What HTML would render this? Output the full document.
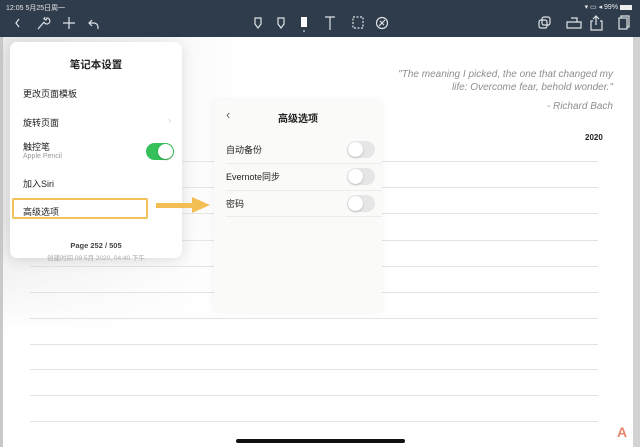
<!DOCTYPE html>
<html><head><meta charset="utf-8"><style>
*{margin:0;padding:0;box-sizing:border-box}
body{width:640px;height:447px;overflow:hidden;position:relative;background:#fff;font-family:"Liberation Sans","Noto Sans CJK SC",sans-serif;}
.hdr{position:absolute;left:0;top:0;width:640px;height:37px;background:#2f3c4b;color:#e6e9ec}
.st{position:absolute;top:3px;font-size:7px;color:#e8e8e8}
.page{position:absolute;left:0;top:37px;width:640px;height:410px;background:#fff}
.ledge{position:absolute;left:0;top:37px;width:3px;height:410px;background:#c9c9c9}
.redge{position:absolute;right:0;top:37px;width:7px;height:410px;background:#d3d3d3}
.shade{position:absolute;left:3px;top:37px;width:240px;height:300px;background:linear-gradient(90deg,rgba(225,225,225,.75),rgba(240,240,240,.35) 75%,rgba(255,255,255,0));-webkit-mask-image:linear-gradient(180deg,#000 60%,transparent);}
.line{position:absolute;left:30px;width:568px;height:1px;background:#e2e2e2}
.quote{position:absolute;right:27px;top:68px;text-align:right;font-style:italic;font-size:10px;color:#8e8e8e;line-height:13px}
.p1{position:absolute;left:10px;top:42px;width:172px;height:216px;background:#fff;border-radius:7px;box-shadow:0 2px 14px rgba(0,0,0,.12)}
.p2{position:absolute;left:214px;top:100px;width:168px;height:212px;background:#fafaf8;box-shadow:0 0 8px rgba(0,0,0,.05)}
.t{position:absolute;font-size:9px;color:#222}
.tg{position:absolute;width:28px;height:17px;border-radius:9px;background:#e6e6e6}
.tg::after{content:"";position:absolute;top:1px;left:1px;width:15px;height:15px;border-radius:50%;background:#fff;box-shadow:0 1px 2px rgba(0,0,0,.2)}
.tg.on{background:#35c05a}.tg.on::after{left:12px}
.sep{position:absolute;height:1px;background:#ececec}
</style></head><body>
<div class="hdr">
<div class="st" style="left:6px">12:05 5月25日周一</div>
<div class="st" style="right:8px">▾ ▭ ◂ 99% <span style="display:inline-block;width:12px;height:5px;background:#eee;vertical-align:middle"></span></div>
<svg width="640" height="37" style="position:absolute;left:0;top:0" fill="none" stroke="#dfe3e7" stroke-width="1.2">
<path d="M19 19l-3 4 3 4"/>
<path d="M38 29l6-7M44 22a3 3 0 1 0 3-4l-1 2-2-1 1-2"/>
<path d="M69 17v12M63 23h12"/>
<path d="M92 20l-3 3 3 3M89 23h5a4 4 0 0 1 4 4v2"/>
<path d="M255 18h6v6l-3 4-3-4z"/>
<path d="M278 18h6v6l-3 4-3-4z"/>
<rect x="301" y="17" width="6" height="10" fill="#fff" stroke="none"/><circle cx="304" cy="31" r=".8" fill="#fff" stroke="none"/>
<path d="M325 17h10M330 17v13"/>
<rect x="353" y="17" width="10" height="11" stroke-dasharray="2 1.5"/>
<circle cx="382" cy="23" r="5.5"/><path d="M379 26l6-6M380 21l4 4"/>
<rect x="539" y="20" width="8" height="8" rx="2"/><rect x="542" y="17" width="8" height="8" rx="2"/>
<path d="M567 22h14v6h-14zM571 18h6v4"/>
<path d="M593 21h-2v9h11v-9h-2M596 25v-9M593 19l3-3 3 3"/>
<rect x="619" y="18" width="8" height="11"/><path d="M621 18v-2h8v11h-2"/>
</svg>
</div>
<div class="page"></div>
<div class="ledge"></div><div class="redge"></div>
<div class="line" style="top:161px"></div>
<div class="line" style="top:187px"></div>
<div class="line" style="top:213px"></div>
<div class="line" style="top:240px"></div>
<div class="line" style="top:266px"></div>
<div class="line" style="top:292px"></div>
<div class="line" style="top:318px"></div>
<div class="line" style="top:344px"></div>
<div class="line" style="top:369px"></div>
<div class="line" style="top:395px"></div>
<div class="line" style="top:421px"></div>
<div class="shade"></div>
<div class="quote">"The meaning I picked, the one that changed my<br>life: Overcome fear, behold wonder."<div style="margin-top:6px">- Richard Bach</div></div>
<div style="position:absolute;left:585px;top:133px;font-size:8px;font-weight:bold;color:#222">2020</div>
<div class="p1">
<div class="t" style="left:0;width:172px;text-align:center;top:15px;font-size:10.5px;font-weight:bold">笔记本设置</div>
<div class="t" style="left:13px;top:45px">更改页面模板</div>
<div class="t" style="left:13px;top:74px">旋转页面</div>
<div class="t" style="left:158px;top:73px;color:#ccc">›</div>
<div class="t" style="left:13px;top:98px">触控笔</div>
<div class="t" style="left:13px;top:111px;font-size:7px;color:#999">Apple Pencil</div>
<div class="tg on" style="left:136px;top:101px"></div>
<div class="t" style="left:13px;top:135px">加入Siri</div>
<div style="position:absolute;left:2px;top:156px;width:136px;height:21px;border:2.5px solid #f1c15a;border-radius:2px"></div>
<div class="t" style="left:13px;top:163px">高级选项</div>
<div class="t" style="left:0;width:172px;text-align:center;top:199px;font-size:7.5px;font-weight:bold;color:#444">Page 252 / 505</div>
<div class="t" style="left:0;width:172px;text-align:center;top:210px;font-size:6.5px;color:#aaa">创建时间 09 5月 2020, 04:40 下午</div>
</div>
<div style="position:absolute;left:156px;top:203px;width:37px;height:5px;background:#f3bf55"></div>
<div style="position:absolute;left:192px;top:197px;width:0;height:0;border-left:18px solid #f3bf55;border-top:8px solid transparent;border-bottom:8px solid transparent"></div>
<div class="p2">
<div class="t" style="left:12px;top:7px;font-size:13px;color:#666">‹</div>
<div class="t" style="left:0;width:168px;text-align:center;top:10px;font-size:10px;font-weight:bold">高级选项</div>
<div class="t" style="left:12px;top:43px">自动备份</div>
<div class="tg" style="left:133px;top:41px"></div>
<div class="sep" style="left:12px;right:0;top:63px"></div>
<div class="t" style="left:12px;top:70px">Evernote同步</div>
<div class="tg" style="left:133px;top:68px"></div>
<div class="sep" style="left:12px;right:0;top:90px"></div>
<div class="t" style="left:12px;top:97px">密码</div>
<div class="tg" style="left:133px;top:95px"></div>
<div class="sep" style="left:12px;right:0;top:116px"></div>
</div>
<div style="position:absolute;left:236px;top:439px;width:169px;height:4px;border-radius:2px;background:#111"></div>
<div style="position:absolute;left:617px;top:424px;font-size:14px;font-weight:bold;color:#e8846a">A</div>
</body></html>
